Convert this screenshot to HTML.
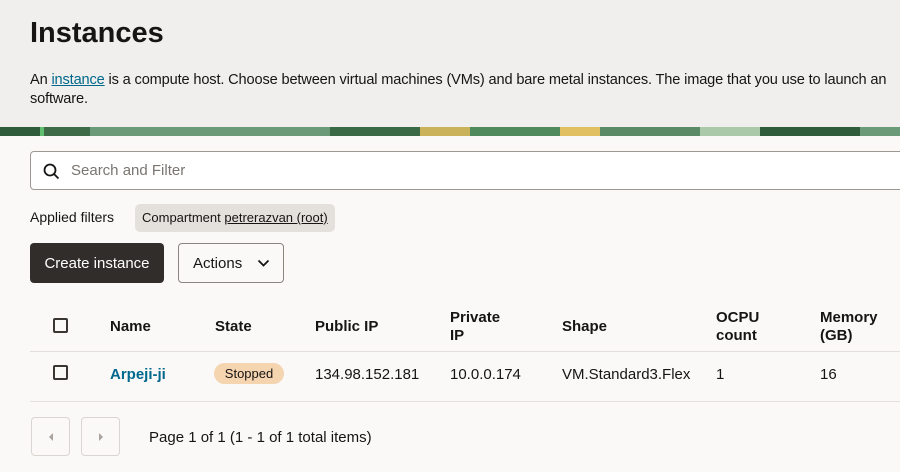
<!DOCTYPE html>
<html><head><style>
*{margin:0;padding:0;box-sizing:border-box}
body{width:900px;height:472px;overflow:hidden;background:#fbf9f8;font-family:"Liberation Sans",sans-serif;color:#161513;position:relative}
.hdr{position:absolute;left:0;top:0;width:900px;height:127px;background:#f1efed}
h1{position:absolute;left:30px;top:17px;font-size:29px;font-weight:bold}
.desc{position:absolute;left:30px;top:71px;font-size:14.6px;letter-spacing:-0.15px;line-height:19px;white-space:nowrap}
.desc a{color:#00688c;text-decoration:underline}
.band{position:absolute;left:0;top:127px;width:900px;height:9px;background:linear-gradient(90deg,#2f5d3b 0 40px,#5fbf6e 40px 44px,#3d6b48 44px 90px,#6a9a78 90px 330px,#3a6a45 330px 420px,#c9b25a 420px 470px,#4f8a5c 470px 560px,#e0c060 560px 600px,#5b8b66 600px 700px,#a9c9a8 700px 760px,#2f5d3b 760px 860px,#6a9a78 860px)}
.search{position:absolute;left:30px;top:151px;width:880px;height:39px;background:#fff;border:1px solid #9e9892;border-radius:4px}
.search span{position:absolute;left:40px;top:10px;font-size:15px;color:#7a7571}
.af{position:absolute;left:30px;top:209px;font-size:14px}
.chip{position:absolute;left:135px;top:204px;height:28px;padding:0 7px;background:#e4e1dd;border-radius:5px;font-size:13px;line-height:28px}
.btn1{position:absolute;left:30px;top:243px;width:134px;height:40px;background:#312d2a;color:#fff;border-radius:4px;font-size:15px;line-height:42px;text-align:center}
.btn2{position:absolute;left:178px;top:243px;width:106px;height:40px;border:1px solid #8b8580;border-radius:4px;font-size:15px;line-height:40px;padding-left:14px;background:#fbf9f8}
.th{position:absolute;font-size:15px;font-weight:bold;line-height:18px}
.td{position:absolute;font-size:15px;top:366px}
.cb{position:absolute;left:53px;width:15px;height:15px;border:2px solid #3a3632;border-radius:2px}
.line{position:absolute;left:30px;width:870px;height:1px;background:#e2dfdc}
.pill{position:absolute;left:214px;top:363px;width:70px;height:21px;background:#f5d4b0;border-radius:11px;font-size:13px;line-height:21px;text-align:center}
.pg{position:absolute;top:417px;width:39px;height:39px;border:1px solid #d9d5d1;border-radius:4px;background:#fbf9f8}
</style></head><body>
<div class="hdr"></div>
<h1>Instances</h1>
<div class="desc">An <a>instance</a> is a compute host. Choose between virtual machines (VMs) and bare metal instances. The image that you use to launch an<br>software.</div>
<div class="band"></div>
<div class="search"><svg style="position:absolute;left:12px;top:11px" width="17" height="17" viewBox="0 0 17 17"><circle cx="7" cy="7" r="5.5" fill="none" stroke="#161513" stroke-width="1.8"/><path d="M11 11l4.5 4.5" stroke="#161513" stroke-width="1.8"/></svg><span>Search and Filter</span></div>
<div class="af">Applied filters</div>
<div class="chip">Compartment <u>petrerazvan (root)</u></div>
<div class="btn1">Create instance</div>
<div class="btn2">Actions <svg style="position:absolute;left:78px;top:15px" width="13" height="9" viewBox="0 0 13 9"><path d="M1.5 1.5l5 5 5-5" fill="none" stroke="#161513" stroke-width="1.8"/></svg></div>
<div class="cb" style="top:318px"></div>
<div class="th" style="left:110px;top:318px">Name</div>
<div class="th" style="left:215px;top:318px">State</div>
<div class="th" style="left:315px;top:318px">Public IP</div>
<div class="th" style="left:450px;top:309px">Private<br>IP</div>
<div class="th" style="left:562px;top:318px">Shape</div>
<div class="th" style="left:716px;top:309px">OCPU<br>count</div>
<div class="th" style="left:820px;top:309px">Memory<br>(GB)</div>
<div class="line" style="top:351px"></div>
<div class="cb" style="top:365px"></div>
<div class="td" style="left:110px;color:#00688c;font-weight:bold">Arpeji-ji</div>
<div class="pill">Stopped</div>
<div class="td" style="left:315px">134.98.152.181</div>
<div class="td" style="left:450px">10.0.0.174</div>
<div class="td" style="left:562px">VM.Standard3.Flex</div>
<div class="td" style="left:716px">1</div>
<div class="td" style="left:820px">16</div>
<div class="line" style="top:401px"></div>
<div class="pg" style="left:31px"><svg style="position:absolute;left:15px;top:14px" width="8" height="10"><path d="M6 1L2 5l4 4z" fill="#a9a49f"/></svg></div>
<div class="pg" style="left:81px"><svg style="position:absolute;left:15px;top:14px" width="8" height="10"><path d="M2 1l4 4-4 4z" fill="#a9a49f"/></svg></div>
<div class="td" style="left:149px;top:429px">Page 1 of 1 (1 - 1 of 1 total items)</div>
</body></html>
